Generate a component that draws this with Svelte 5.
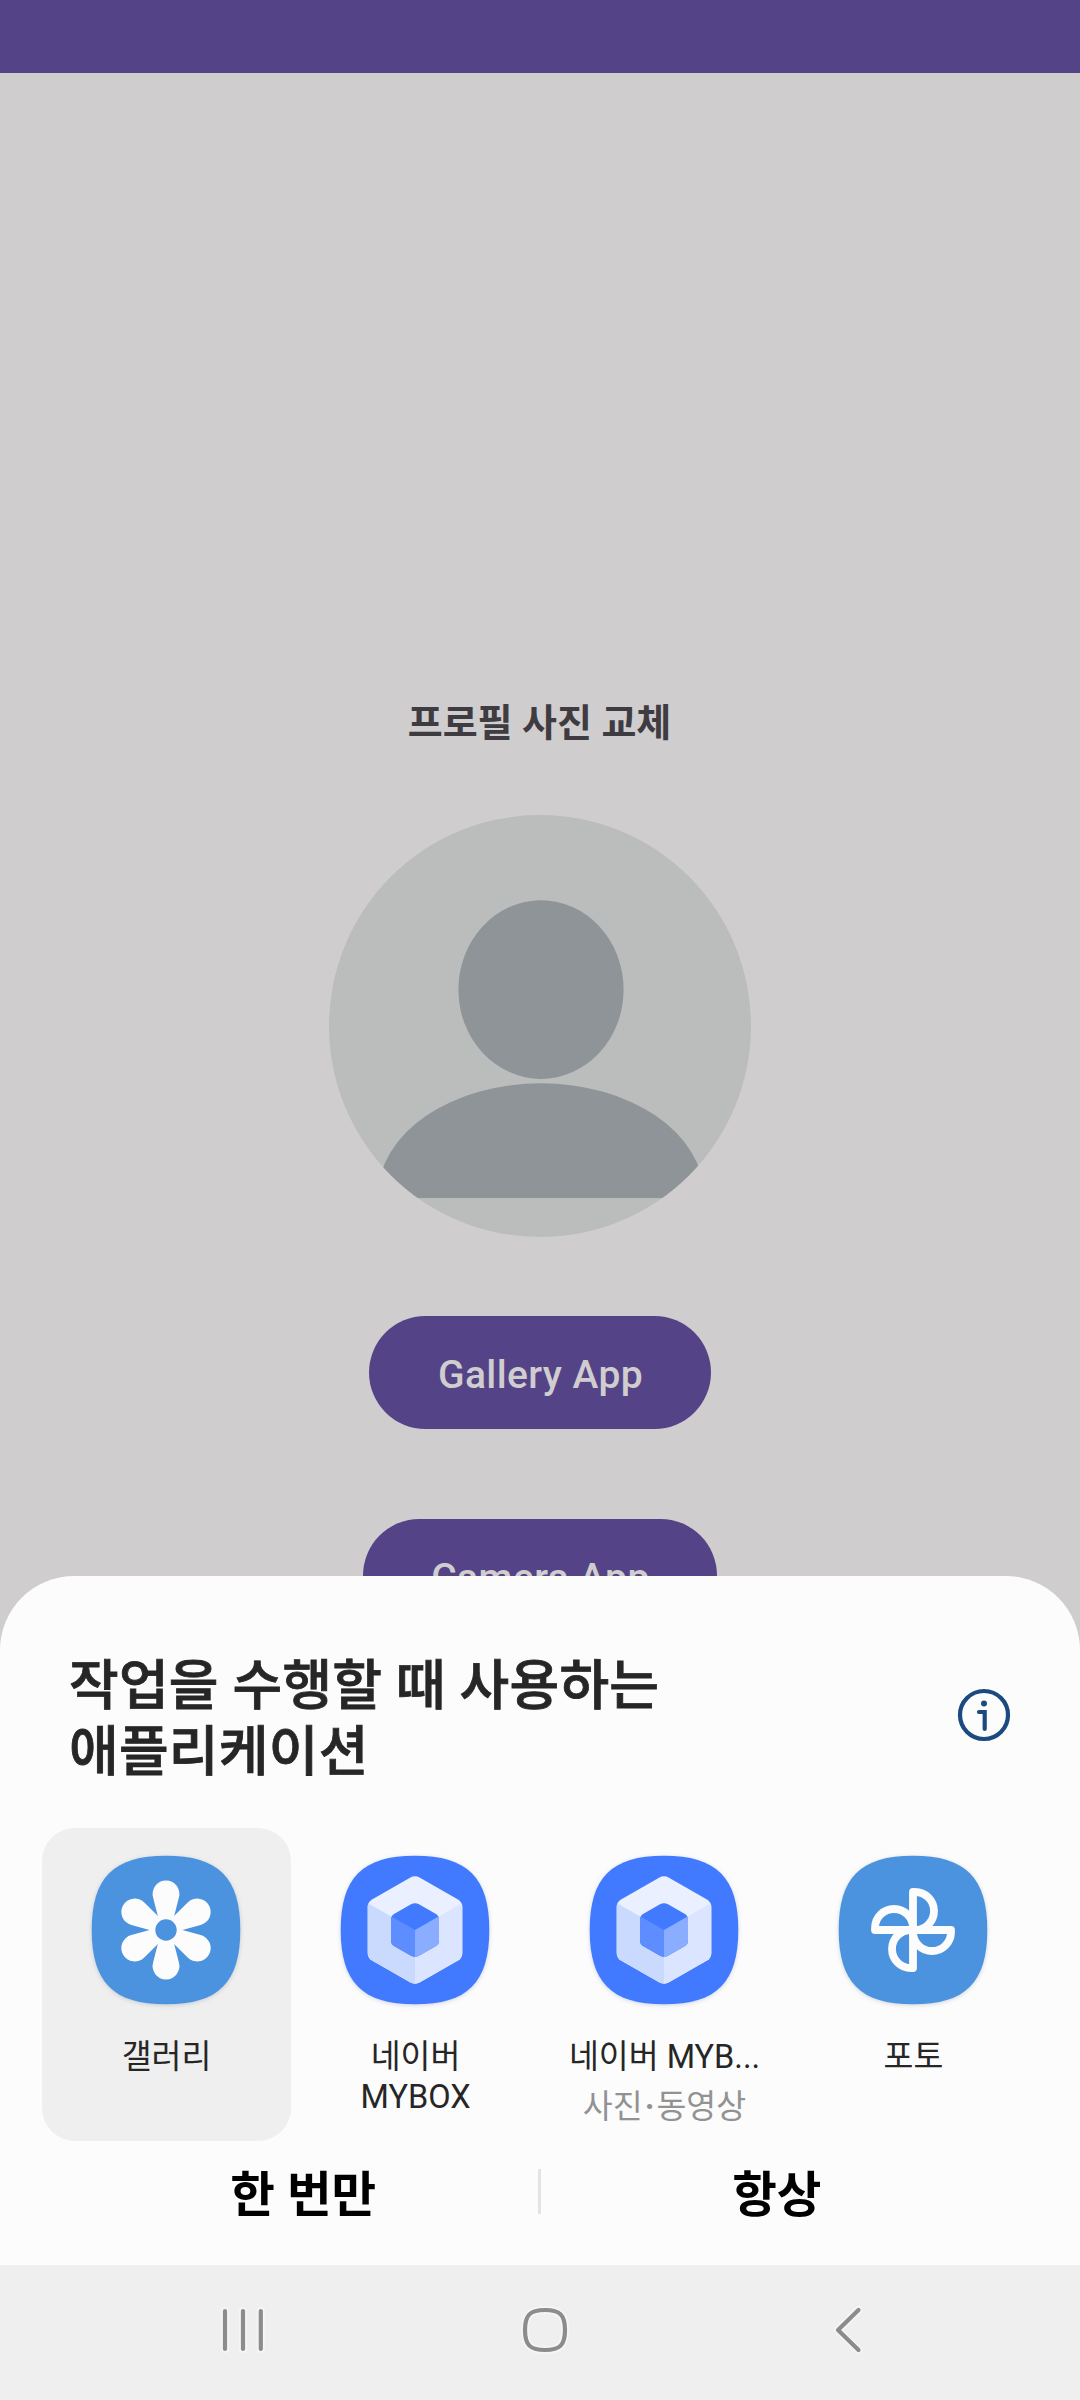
<script>
  const apps = [
    { icon: 'gallery', lines: ['갤러리'], selected: true },
    { icon: 'mybox', lines: ['네이버', 'MYBOX'] },
    { icon: 'mybox', lines: ['네이버 MYB...'], sub: ['사진', '동영상'] },
    { icon: 'photos', lines: ['포토'] },
  ];
  const squircle =
    'M0-74.3C52.5-74.3 74.3-52.5 74.3 0S52.5 74.3 0 74.3-74.3 52.5-74.3 0-52.5-74.3 0-74.3Z';
  const outerHex =
    'M-5-52.3Q0-55 5-52.3L43-30.6Q47.3-28 47.3-23V23Q47.3 28 43 30.6L5 52.3Q0 55-5 52.3L-43 30.6Q-47.3 28-47.3 23V-23Q-47.3-28-43-30.6Z';
  const innerHex =
    'M-4-25.7Q0-28 4-25.7L21-16Q24-14 24-10.5V10.5Q24 14 21 16L4 25.7Q0 28-4 25.7L-21 16Q-24 14-24 10.5V-10.5Q-24-14-21-16Z';
</script>

<div class="screen">
  <div class="status"></div>
  <main>
    <h1>프로필 사진 교체</h1>
    <svg class="avatar" width="422" height="422" viewBox="329 814.7 422 422">
      <clipPath id="face"><circle cx="540" cy="1025.7" r="211" /></clipPath>
      <g clip-path="url(#face)">
        <rect x="329" y="814" width="422" height="424" fill="#babdbc" />
        <g fill="#8e9497">
          <ellipse cx="541" cy="989.3" rx="82.6" ry="89.3" />
          <path d="M378 1197.6V1195A163 112 0 0 1 704 1195V1197.6Z" />
        </g>
      </g>
    </svg>
    <button class="pill">Gallery App</button>
    <button class="pill camera">Camera App</button>
  </main>

  <section class="sheet">
    <header>
      <h2>작업을 수행할 때 사용하는<br />애플리케이션</h2>
      <svg width="54" height="54" viewBox="-27 -27 54 54" fill="none" stroke="#1b4a80">
        <circle r="24" stroke-width="4.2" />
        <circle cy="-11.5" r="3" fill="#1b4a80" stroke="none" />
        <path d="M-5-3H.7V14" stroke-width="4.2" stroke-linecap="round" />
      </svg>
    </header>
    <div class="apps">
      {#each apps as app}
        <div class="app" class:selected={app.selected}>
          <svg class="icon" width="150" height="150" viewBox="-75 -75 150 150">
            <path d={squircle} fill={app.icon === 'mybox' ? '#4179ff' : '#4c93df'} />
            {#if app.icon === 'gallery'}
              <g fill="#fcfcfd">
                {#each [0, 60, 120, 180, 240, 300] as angle}
                  <path
                    transform={`rotate(${angle})`}
                    d="M0 0-8-13.3-12.9-32.5A13.4 13.4 0 1 1 12.9-32.5L8-13.3Z"
                  />
                {/each}
              </g>
              <circle r="10.7" fill="#4c93df" />
            {:else if app.icon === 'mybox'}
              <clipPath id="outer-hex"><path d={outerHex} /></clipPath>
              <clipPath id="inner-hex"><path d={innerHex} /></clipPath>
              <g clip-path="url(#outer-hex)">
                <path d="M-60-60H60V60H-60Z" fill="#eaf0ff" />
                <path d="M0 0-60-34.2V60H0Z" fill="#cadaff" />
                <path d="M0 0 60-34.2V60H0Z" fill="#dbe5ff" />
              </g>
              <g clip-path="url(#inner-hex)">
                <path d="M-30-30H30V30H-30Z" fill="#4179ff" />
                <path d="M0 0-30-17.1V30H0Z" fill="#5e8dff" />
                <path d="M0 0 30-17.1V30H0Z" fill="#8badff" />
              </g>
            {:else}
              <g fill="none" stroke="#fcfcfd" stroke-width="7.8" stroke-linejoin="round">
                {#each [0, 90, 180, 270] as angle}
                  <path transform={`rotate(${angle})`} d="M0 0V-38H2A19 19 0 0 1 2 0Z" />
                {/each}
              </g>
            {/if}
          </svg>
          <div class="label">
            {#each app.lines as line}<span>{line}</span>{/each}
            {#if app.sub}
              <span class="sub">{app.sub[0]}<b>·</b>{app.sub[1]}</span>
            {/if}
          </div>
        </div>
      {/each}
    </div>
    <div class="actions">
      <button>한 번만</button>
      <i></i>
      <button>항상</button>
    </div>
  </section>

  <nav>
    <svg width="1080" height="135" viewBox="0 2265 1080 135" fill="none" stroke-linecap="round" stroke-linejoin="round">
      {#each ['halo', 'line'] as layer}
        <g class={layer}>
          <path d="M225 2311V2349M243 2311V2349M260.8 2311V2349" />
          <path d="M545 2310C560 2310 565 2315 565 2330S560 2350 545 2350 525 2345 525 2330 530 2310 545 2310Z" />
          <path d="M858.5 2310 838 2330 858.5 2350" />
        </g>
      {/each}
    </svg>
  </nav>
</div>

<style>
  :global(body) {
    margin: 0;
  }
  .screen {
    position: relative;
    width: 1080px;
    height: 2400px;
    overflow: hidden;
    background: #d0cdcf;
    font-family: Roboto, 'Noto Sans CJK KR', sans-serif;
  }
  .status {
    height: 73px;
    background: #544386;
  }
  h1,
  h2 {
    margin: 0;
  }
  button {
    border: 0;
    padding: 0;
    font-family: inherit;
  }
  main {
    display: flex;
    flex-direction: column;
    align-items: center;
    padding-top: 620px;
  }
  h1 {
    font-size: 38px;
    line-height: 60px;
    font-weight: 700;
    color: #3e3b41;
    margin-right: 1px;
  }
  .avatar {
    display: block;
    margin-top: 61.7px;
  }
  .pill {
    width: 342px;
    height: 113px;
    margin-top: 79px;
    padding: 5px 0 0 1px;
    border-radius: 57px;
    background: #544386;
    color: #d0cdcf;
    font-size: 39px;
    font-weight: 500;
    letter-spacing: 0.4px;
  }
  .pill.camera {
    width: 354px;
    margin-top: 90px;
  }
  .sheet {
    position: absolute;
    left: 0;
    top: 1576px;
    width: 1080px;
    height: 689px;
    box-sizing: border-box;
    border-radius: 74px 74px 0 0;
    background: #fcfcfc;
    padding-top: 78px;
  }
  header {
    display: flex;
    justify-content: space-between;
    padding: 0 69px;
    height: 174px;
  }
  header svg {
    margin-top: 34px;
  }
  h2 {
    font-size: 54px;
    line-height: 66px;
    font-weight: 500;
    letter-spacing: 0.25px;
    color: #262626;
    -webkit-text-stroke: 0.8px #262626;
  }
  .apps {
    display: flex;
    padding-left: 42px;
  }
  .app {
    width: 249px;
    height: 313px;
    display: flex;
    flex-direction: column;
    align-items: center;
    border-radius: 33px;
  }
  .selected {
    background: #efefef;
  }
  .icon {
    margin: 27px 1px 0 0;
    filter: drop-shadow(0 1px 2px rgba(40, 60, 100, 0.2));
  }
  .label {
    display: flex;
    flex-direction: column;
    align-items: center;
    margin-top: 32px;
    font-size: 32.5px;
    line-height: 40px;
    color: #262626;
  }
  .sub {
    margin-top: 10px;
    color: #929292;
  }
  .sub b {
    padding: 0 2px;
  }
  .actions {
    display: flex;
    align-items: center;
    height: 101px;
    padding: 0 69px 0 67px;
  }
  .actions button {
    flex: 1;
    background: none;
    padding: 8px 0 0 2px;
    font-size: 48.5px;
    line-height: 60px;
    font-weight: 700;
    color: #000;
  }
  .actions i {
    width: 3px;
    height: 45px;
    background: #e4e4e4;
  }
  nav {
    position: absolute;
    left: 0;
    top: 2265px;
    background: #efefef;
    height: 135px;
  }
  nav svg {
    display: block;
  }
  .halo {
    stroke: #f5f5f5;
    stroke-width: 8;
  }
  .line {
    stroke: #8c8c8c;
    stroke-width: 4.2;
  }
</style>
